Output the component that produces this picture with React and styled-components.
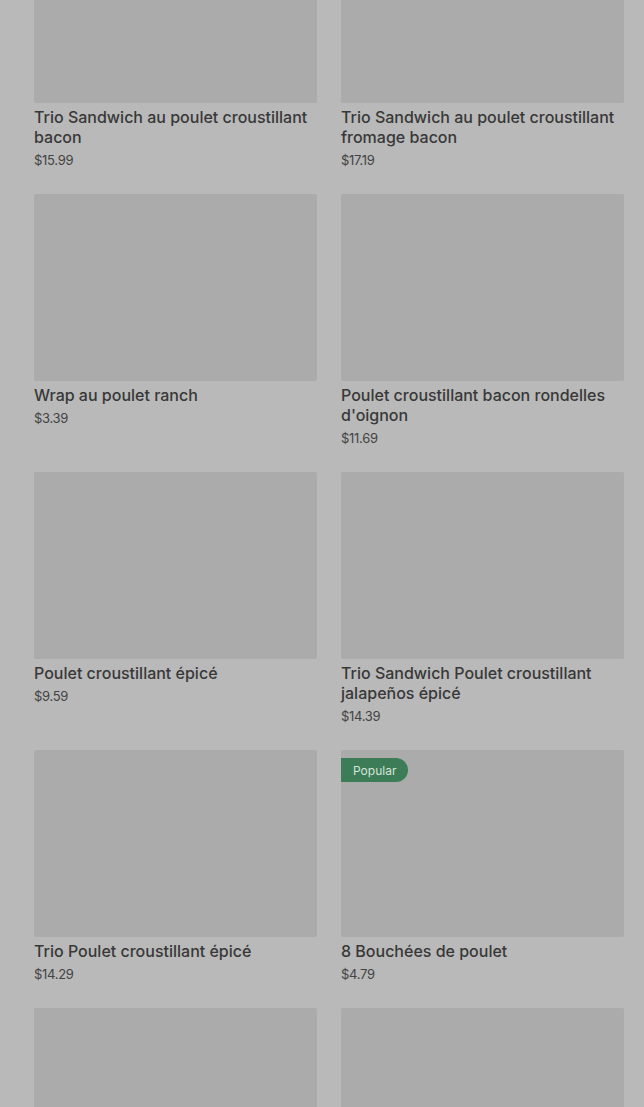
import React from 'react';
import styled, { createGlobalStyle } from 'styled-components';

const GlobalStyle = createGlobalStyle`
    html, body {
        margin: 0;
        padding: 0;
        background: #b9b9b9;
        overflow: hidden;
    }
    body {
        font-family: Inter, "Noto Sans", sans-serif;
        -webkit-font-smoothing: antialiased;
    }
`;

const Page = styled.div`
    width: 644px;
    height: 1107px;
    overflow: hidden;
    background: #b9b9b9;
`;

const Grid = styled.div`
    display: grid;
    grid-template-columns: 283px 283px;
    column-gap: 24px;
    row-gap: 25px;
    padding: 0 20px 0 34px;
    margin-top: -84px;
`;

const Card = styled.div`
    display: flex;
    flex-direction: column;
`;

const Thumb = styled.div`
    position: relative;
    height: 187px;
    background: #ababab;
    border-radius: 2px;
`;

const Badge = styled.span`
    position: absolute;
    top: 8px;
    left: 0;
    height: 24px;
    padding: 0 12px;
    display: flex;
    align-items: center;
    background: #3c7c56;
    color: #d6e4da;
    font-size: 12px;
    border-radius: 0 12px 12px 0;
`;

const Title = styled.div`
    margin-top: 4px;
    font-size: 16px;
    line-height: 20px;
    font-weight: 500;
    color: #383838;
`;

const Price = styled.div`
    margin-top: 4px;
    font-size: 13px;
    line-height: 18px;
    color: #434343;
    letter-spacing: -0.3px;
`;

const items = [
    { name: 'Trio Sandwich au poulet croustillant bacon', price: '$15.99' },
    { name: 'Trio Sandwich au poulet croustillant fromage bacon', price: '$17.19' },
    { name: 'Wrap au poulet ranch', price: '$3.39' },
    { name: "Poulet croustillant bacon rondelles d'oignon", price: '$11.69' },
    { name: 'Poulet croustillant épicé', price: '$9.59' },
    { name: 'Trio Sandwich Poulet croustillant jalapeños épicé', price: '$14.39' },
    { name: 'Trio Poulet croustillant épicé', price: '$14.29' },
    { name: '8 Bouchées de poulet', price: '$4.79', popular: true },
    { name: 'next-1' },
    { name: 'next-2' },
];

const MenuCard = ({ name, price, popular }) => (
    <Card>
        <Thumb>{popular && <Badge>Popular</Badge>}</Thumb>
        {price && <Title>{name}</Title>}
        {price && <Price>{price}</Price>}
    </Card>
);

const App = () => (
    <Page>
        <GlobalStyle />
        <Grid>
            {items.map((item) => (
                <MenuCard key={item.name} {...item} />
            ))}
        </Grid>
    </Page>
);

export default App;
